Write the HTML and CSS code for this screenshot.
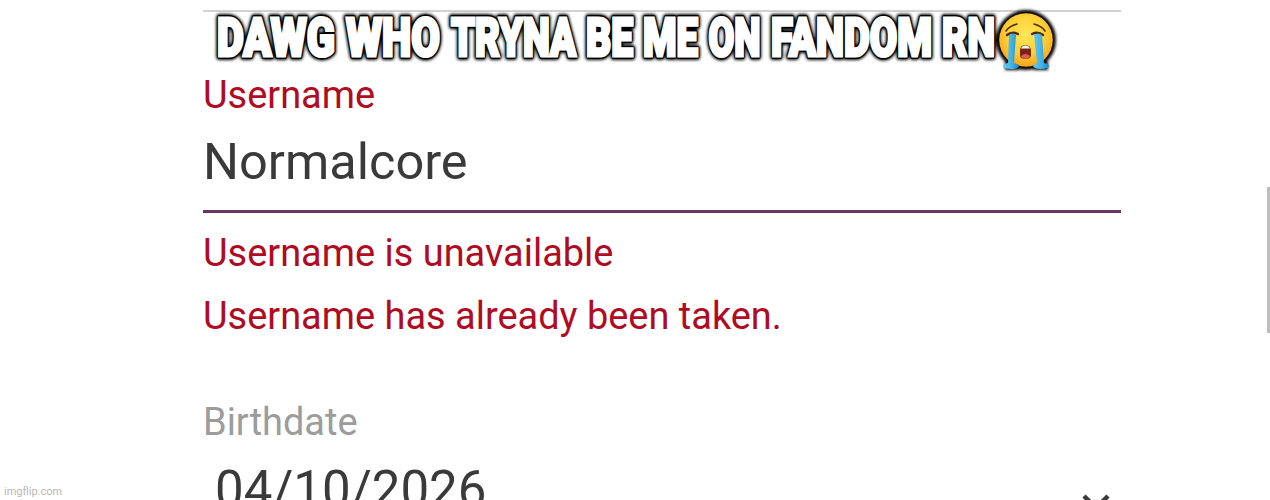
FILE: index.html
```html
<!DOCTYPE html>
<html lang="en">
<head>
<meta charset="utf-8">
<title>Username is unavailable</title>
<link rel="stylesheet" href="styles.css">
</head>
<body>
<main class="form">
  <section class="field username">
    <label class="label error">Username</label>
    <div class="value">Normalcore</div>
    <p class="message first">Username is unavailable</p>
    <p class="message">Username has already been taken.</p>
  </section>
  <section class="field birthdate">
    <label class="label muted">Birthdate</label>
    <div class="date"><span>04/10/2026</span>
      <svg class="chevron" width="30" height="20" viewBox="0 0 30 20"><path d="M3 3 15 15 27 3"/></svg>
    </div>
  </section>
</main>
<svg class="caption" width="1270" height="90" viewBox="0 0 1270 90">
  <defs>
    <filter id="soft" x="-5%" y="-20%" width="110%" height="140%"><feGaussianBlur stdDeviation="1.5"/></filter>
    <radialGradient id="face" cx=".5" cy=".4" r=".6"><stop offset="0" stop-color="#ffe75a"/><stop offset=".6" stop-color="#fdd035"/><stop offset="1" stop-color="#f3a51c"/></radialGradient>
    <linearGradient id="tear" x1="0" x2="1" y1="0" y2="0"><stop offset="0" stop-color="#64c9ee"/><stop offset=".5" stop-color="#45b4e5"/><stop offset="1" stop-color="#168ed0"/></linearGradient>
    <g id="words">
      <text x="217" y="56" textLength="118" lengthAdjust="spacingAndGlyphs">DAWG</text>
      <text x="346" y="56" textLength="94" lengthAdjust="spacingAndGlyphs">WHO</text>
      <text x="451" y="56" textLength="125" lengthAdjust="spacingAndGlyphs">TRYNA</text>
      <text x="586" y="56" textLength="47" lengthAdjust="spacingAndGlyphs">BE</text>
      <text x="643" y="56" textLength="55" lengthAdjust="spacingAndGlyphs">ME</text>
      <text x="708.500" y="56" textLength="52" lengthAdjust="spacingAndGlyphs">ON</text>
      <text x="771" y="56" textLength="161" lengthAdjust="spacingAndGlyphs">FANDOM</text>
      <text x="942" y="56" textLength="53" lengthAdjust="spacingAndGlyphs">RN</text>
    </g>
  </defs>
  <g class="shadow" filter="url(#soft)">
    <use href="#words"/>
    <circle cx="1026" cy="40" r="26"/>
    <path d="M1005 66h14M1034 66h14"/>
  </g>
  <use class="outline" href="#words"/>
  <use class="fill" href="#words"/>
  <circle cx="1026" cy="40" r="26.8" fill="url(#face)"/>
  <g class="brow"><path d="M1006 31q3-5 11-7M1034 24q8 2 11 7"/><path class="lid" d="M1007 35q5-4 11-1M1032 34q6-3 11 1"/></g>
  <path fill="url(#tear)" d="M1009 35q4-3 7 0l-2 28q5 1 5 3-1 3-8 3-8 0-8-3 0-2 5-3Z"/>
  <path fill="url(#tear)" d="M1034 35q4-3 8 0l2 28q5 1 5 3-1 3-8 3-7 0-8-3 1-2 4-3Z"/>
  <path fill="#782313" d="M1020 51q0-6 5-6 6 0 6 6v4q0 4-6 4-5 0-5-4Z"/>
  <path fill="#fff" d="M1021 48.500q1-3 4-3 4 0 5 3Z"/>
  <path fill="#e05c50" d="M1021 56q4-4 9 0-1 3-5 3-3 0-4-3Z"/>
</svg>
<div class="scrollbar"></div>
<div class="watermark">imgflip.com</div>
</body>
</html>
```
FILE: styles.css
```css
* { box-sizing: border-box; }
body {
  display: flow-root;
  margin: 0;
  height: 500px;
  position: relative;
  overflow: hidden;
  background: #fff;
  font-family: Roboto, sans-serif;
}
.form {
  width: 918px;
  height: 490px;
  margin: 10px 0 0 203px;
  border-top: 2px solid #d2d2d2;
}
.field { display: flex; flex-direction: column; }
.username { padding-top: 64px; }
.label, .message {
  margin: 0;
  font-size: 37.95px;
  line-height: 38px;
  white-space: nowrap;
}
.error, .message { color: #b00b22; }
.muted { color: #9c9c9c; }
.value {
  height: 99px;
  padding-top: 23px;
  border-bottom: 3px solid #6b3562;
  color: #3a3a3a;
  font-size: 50.5px;
  line-height: 50px;
}
.message { margin-bottom: 25px; }
.first { margin-top: 21px; }
.birthdate { padding-top: 43px; }
.date {
  display: flex;
  justify-content: space-between;
  align-items: center;
  margin-top: 24px;
  padding: 0 10px 0 12px;
  color: #3a3a3a;
  font-size: 51px;
  line-height: 50px;
}
.chevron { margin-top: 25px; }
.chevron path { fill: none; stroke: #3a3a3a; stroke-width: 4.5; }
.caption { position: absolute; left: 0; top: 0; }
.caption text { font: 900 54px Roboto, sans-serif; }
.shadow { fill: #000; stroke: #000; stroke-width: 8; stroke-linejoin: round; }
.outline { fill: #000; stroke: #000; stroke-width: 6; stroke-linejoin: round; }
.fill { fill: #fff; stroke: #fff; stroke-width: 3.2; }
.brow { fill: none; stroke: #4b2b0b; stroke-width: 1.5; stroke-linecap: round; }
.lid { stroke-width: 2.4; }
.scrollbar {
  position: absolute;
  right: 0;
  top: 187px;
  width: 3px;
  height: 146px;
  background: #bebebe;
}
.watermark {
  position: absolute;
  left: 4px;
  top: 485px;
  color: #b8b8b8;
  font-size: 11px;
  line-height: 13px;
}
```
